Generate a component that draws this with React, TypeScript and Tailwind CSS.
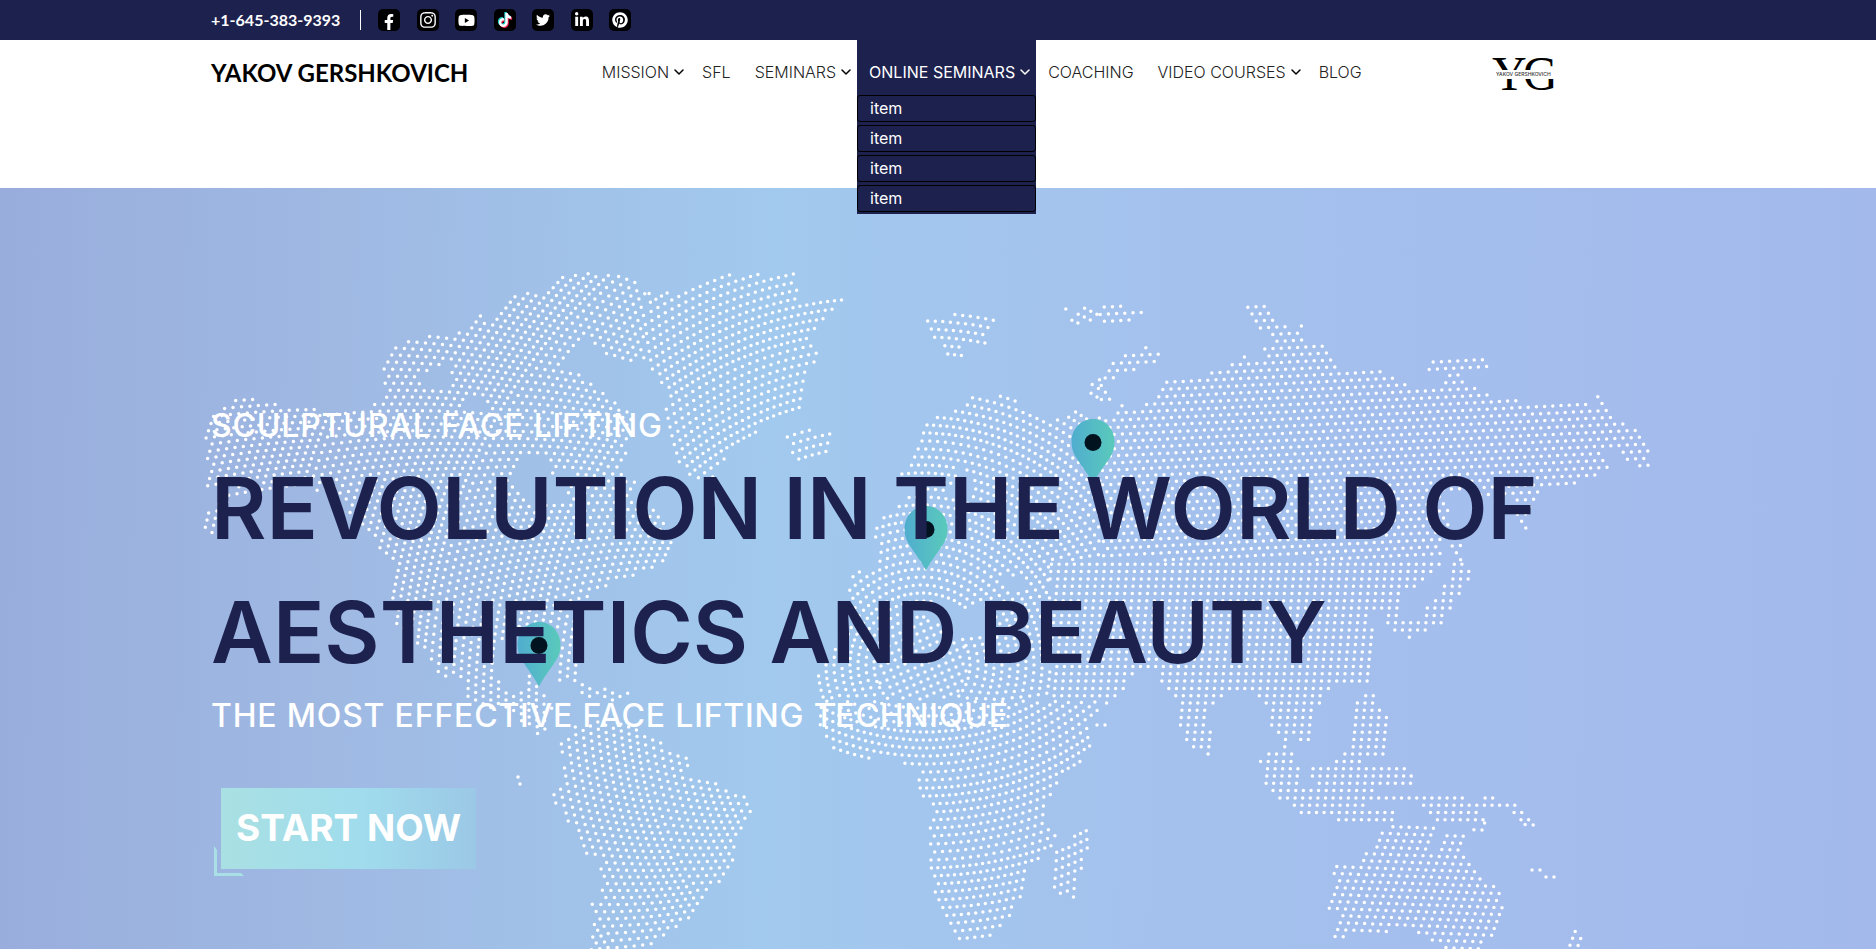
import React from "react";
import { ChevronDown } from "lucide-react";
import {
  FaFacebookF,
  FaInstagram,
  FaYoutube,
  FaTiktok,
  FaTwitter,
  FaLinkedinIn,
  FaPinterest,
} from "react-icons/fa";

type Pt = [number, number];

/* ---------- dotted world map ---------- */

const parse = (s: string): Pt[] =>
  s.split(" ").map((p) => p.split(",").map(Number) as Pt);

const LAND: Pt[][] = [
  // North America and Greenland
  "204,420 228,401 246,396 298,408 308,408 340,412 357,410 372,407 378,398 388,392 379,388 386,358 402,340 425,340 433,331 454,334 464,327 480,315 492,320 505,302 526,289 541,291 568,274 607,272 630,276 645,293 683,293 698,280 706,275 795,273 799,298 842,300 832,314 818,330 800,332 818,343 818,356 808,375 805,392 800,408 782,420 760,430 738,446 726,460 712,478 692,478 680,468 674,458 668,440 660,415 668,400 662,385 650,372 655,362 644,362 620,360 612,364 605,352 595,345 590,333 577,348 564,358 566,368 578,374 598,390 622,404 634,420 632,440 623,460 622,478 640,482 625,500 659,507 674,547 668,563 630,577 605,587 592,597 578,620 576,640 578,684 558,682 558,645 540,634 500,640 497,673 505,690 522,690 529,675 540,688 554,703 543,742 534,730 516,717 494,709 469,704 461,684 438,672 423,651 394,622 387,600 392,562 386,554 368,537 343,504 310,488 270,490 235,500 212,535 204,530 206,515 235,488 204,486 208,470 204,455",
  "577,680 598,686 632,693 625,702 600,700 577,692",
  // South America
  "557,740 567,734 575,727 590,720 642,726 650,738 662,742 690,760 688,778 702,775 720,786 738,791 755,802 743,830 735,845 735,860 722,882 707,892 698,902 694,912 680,928 655,945 655,962 586,962 590,940 592,915 590,898 602,900 600,870 605,862 603,852 586,858 572,828 556,805 550,790 561,782 560,768 568,760 557,748",
  // Europe, Africa and Asia
  "901,474 915,452 920,430 940,415 955,407 975,396 1003,395 1030,408 1048,416 1055,420 1075,410 1080,405 1095,418 1110,416 1122,408 1105,400 1085,398 1090,386 1098,376 1110,360 1130,352 1148,346 1166,350 1155,367 1140,368 1118,376 1107,386 1112,396 1128,408 1140,405 1150,398 1160,385 1170,376 1185,382 1195,378 1207,372 1228,364 1245,355 1268,362 1263,346 1272,340 1262,332 1242,308 1265,304 1287,328 1303,325 1307,340 1325,346 1345,370 1380,371 1403,384 1431,387 1441,383 1444,375 1426,372 1432,360 1482,358 1492,369 1458,374 1469,383 1487,394 1520,400 1536,406 1594,404 1597,396 1612,397 1607,413 1619,420 1647,433 1647,445 1654,466 1630,466 1620,450 1606,453 1608,472 1578,480 1570,488 1538,492 1535,507 1525,530 1518,520 1508,495 1490,495 1446,495 1450,520 1443,545 1441,563 1433,575 1420,587 1400,593 1400,606 1371,614 1374,630 1374,684 1350,685 1327,690 1325,699 1318,710 1317,727 1315,743 1302,742 1290,735 1289,748 1293,757 1262,754 1278,750 1280,740 1266,727 1266,710 1262,703 1248,690 1235,690 1215,707 1208,714 1208,725 1215,735 1209,757 1200,750 1188,745 1176,722 1178,705 1168,694 1162,682 1156,672 1135,668 1128,685 1120,697 1100,707 1090,722 1088,730 1092,745 1084,760 1070,772 1058,785 1047,800 1047,822 1057,833 1055,847 1045,854 1030,870 1029,885 1025,895 1012,907 1010,919 995,934 988,942 953,940 946,925 938,905 933,885 931,870 930,855 930,830 932,812 928,802 918,796 918,780 926,775 908,766 893,757 880,757 862,759 850,757 835,750 820,728 818,700 815,680 822,663 835,650 843,620 848,597 853,573 870,570 882,556 872,540 880,520 895,508 905,500 918,490",
  // Japan
  "1452,545 1463,545 1466,565 1475,571 1467,582 1454,605 1440,625 1422,632 1408,640 1397,632 1382,624 1382,605 1400,607 1402,620 1410,616 1424,618 1427,605 1440,598 1442,585 1452,575",
  // Svalbard, Franz Josef Land, Iceland, Madagascar
  "925,320 960,313 968,313 1002,321 985,332 986,347 962,345 962,358 945,358 943,345 928,340",
  "1062,306 1072,312 1085,304 1092,312 1098,310 1118,300 1128,306 1140,308 1152,310 1125,326 1104,322 1098,318 1090,326 1070,324",
  "787,430 806,428 836,431 830,448 833,458 805,463 787,456",
  "1084,824 1091,833 1088,847 1083,870 1078,885 1078,900 1062,897 1052,885 1056,860 1055,850 1070,840",
  // Philippines, Indonesia, New Guinea
  "1360,693 1373,693 1379,708 1387,715 1385,735 1390,757 1376,757 1370,747 1366,764 1402,766 1416,776 1414,786 1385,786 1376,790 1384,795 1460,794 1468,800 1482,798 1495,796 1512,803 1526,812 1538,830 1525,832 1515,817 1500,809 1478,809 1485,820 1484,832 1470,830 1465,820 1450,824 1440,824 1425,815 1418,803 1370,801 1362,809 1394,812 1392,822 1338,823 1335,815 1300,815 1280,800 1266,785 1262,770 1258,757 1293,752 1301,770 1298,787 1314,787 1309,767 1328,764 1345,754 1350,730",
  // Australia, New Zealand
  "1398,824 1438,825 1430,850 1440,850 1444,832 1465,832 1462,850 1477,865 1490,883 1505,890 1502,922 1493,937 1483,949 1430,947 1420,934 1400,930 1378,936 1345,936 1337,944 1331,930 1335,915 1326,907 1335,885 1333,867 1355,861 1367,852 1378,840 1382,831",
  "1573,930 1580,932 1586,942 1580,954 1566,954",
].map(parse);

const SEA: Pt[][] = [
  "522,453 545,460 552,474 560,464 572,474 566,500 540,505 518,492 510,478",
  "418,374 450,364 452,384 425,388",
  "463,394 486,402 484,412 465,408",
  "905,592 916,603 938,602 960,612 985,606 996,622 985,632 960,640 945,625 922,615",
  "1000,578 1015,576 1034,590 1010,594",
  "960,464 971,475 970,500 956,504 950,490 958,480",
].map(parse);

const inside = (x: number, y: number, poly: Pt[]) => {
  let hit = false;
  for (let i = 0, j = poly.length - 1; i < poly.length; j = i++) {
    const [xi, yi] = poly[i];
    const [xj, yj] = poly[j];
    if (yi > y !== yj > y && x < ((xj - xi) * (y - yi)) / (yj - yi) + xi) hit = !hit;
  }
  return hit;
};

const onLand = (x: number, y: number) =>
  LAND.some((p) => inside(x, y, p)) && !SEA.some((p) => inside(x, y, p));

type Zone = (x: number, y: number) => boolean;

// Dots on concentric arcs; the angular step is constant within a band of rings.
const arcs = (cx: number, cy: number, dr: number, step: number, zone: Zone): Pt[] => {
  const out: Pt[] = [];
  for (let k = 1; k * dr < 900; k++) {
    const r = k * dr;
    const band = 2 ** (Math.round(Math.log2(r) * 3) / 3);
    const n = Math.max(6, Math.round((2 * Math.PI * band) / step));
    for (let i = 0; i < n; i++) {
      const t = ((i + (k % 2) / 2) * 2 * Math.PI) / n;
      const x = cx + r * Math.cos(t);
      const y = cy + r * Math.sin(t);
      if (zone(x, y) && onLand(x, y)) out.push([x, y]);
    }
  }
  return out;
};

// Dots on a plain lattice: a runs along a row, b leads to the next row.
const grid = (o: Pt, a: Pt, b: Pt, zone: Zone): Pt[] => {
  const out: Pt[] = [];
  for (let j = -80; j < 120; j++) {
    for (let i = -120; i < 140; i++) {
      const x = o[0] + i * a[0] + j * b[0];
      const y = o[1] + i * a[1] + j * b[1];
      if (zone(x, y) && onLand(x, y)) out.push([x, y]);
    }
  }
  return out;
};

const isGreenland: Zone = (x, y) => x > 645 && x < 870 && y < 485;
const isSahara: Zone = (x, y) => Math.hypot(x - 922, y - 665) < 46;

const DOTS: Pt[] = [
  ...arcs(1000, 700, 7.6, 7.4, (x, y) => x < 800 && !isGreenland(x, y)),
  ...arcs(880, 700, 8.2, 7.1, isGreenland),
  ...arcs(
    922,
    665,
    8,
    7.1,
    (x, y) =>
      x >= 800 && !isGreenland(x, y) && !isSahara(x, y) && ((x < 1100 && y < 560) || (x < 1050 && y < 700)),
  ),
  ...grid([922, 665], [7, -3], [3, 7], (x, y) => isSahara(x, y) && y < 700),
  ...arcs(925, 500, 8, 7.1, (x, y) => x >= 800 && x < 1100 && y >= 700),
  ...grid([1240, 336], [8.2, -0.4], [4.2, 6.9], (x, y) => x >= 1100 && y < 560),
  ...grid([1372, 630], [7.6, 0], [-0.7, 7.3], (x, y) => y >= 560 && x >= (y < 700 ? 1050 : 1100) && y < 823),
  ...grid([1401, 827], [8.1, 0.3], [-2.6, 6.9], (x, y) => x > 1200 && y >= 823),
  [518, 777], [520, 784], [1097, 725], [1105, 725], [1532, 870], [1540, 870], [1546, 877], [1554, 877],
];

const DOT_PATH = DOTS.map(([x, y]) => `M${x.toFixed(1)} ${y.toFixed(1)}h0`).join("");

const PINS: Pt[] = [
  [539, 622],
  [926, 506],
  [1093, 419],
];

function WorldMap() {
  return (
    <svg
      aria-hidden="true"
      className="absolute inset-0 h-full w-full"
      viewBox="0 188 1876 761"
      preserveAspectRatio="xMidYMin slice"
    >
      <defs>
        <linearGradient id="pin" x1="0" x2="1" y1="0" y2="0">
          <stop offset="0" stopColor="#50adcf" />
          <stop offset="1" stopColor="#5acabb" />
        </linearGradient>
      </defs>
      <path d={DOT_PATH} stroke="#fff" strokeWidth="3.5" strokeLinecap="round" fill="none" />
      {PINS.map(([x, y]) => (
        <g key={x} transform={`translate(${x - 22} ${y})`}>
          <path d="M22 0C10 0 0.500 10 0.500 22.500C0.500 29 2 34 5 38.500C12 49 17 55 22 64.500C27 55 32 49 39 38.500C42 34 43.500 29 43.500 22.500C43.500 10 34 0 22 0Z" fill="url(#pin)" />
          <circle cx="22" cy="23.500" r="8.500" fill="#01131f" />
        </g>
      ))}
    </svg>
  );
}

/* ---------- header ---------- */

const SOCIAL = [
  { name: "Facebook", icon: <FaFacebookF className="h-4 w-4 translate-y-0.5" /> },
  { name: "Instagram", icon: <FaInstagram className="h-[18px] w-[18px]" /> },
  { name: "YouTube", icon: <FaYoutube className="h-[17px] w-[17px]" /> },
  {
    name: "TikTok",
    icon: <FaTiktok className="h-3.5 w-3.5 [filter:drop-shadow(-1px_-1px_0_#25d5cf)_drop-shadow(1px_1px_0_#e8264f)]" />,
  },
  { name: "Twitter", icon: <FaTwitter className="h-3.5 w-3.5" /> },
  { name: "LinkedIn", icon: <FaLinkedinIn className="h-4 w-4" /> },
  { name: "Pinterest", icon: <FaPinterest className="h-4 w-4" /> },
];

const NAV = [
  { label: "MISSION", more: true },
  { label: "SFL" },
  { label: "SEMINARS", more: true },
  { label: "ONLINE SEMINARS", more: true, items: ["item", "item", "item", "item"] },
  { label: "COACHING" },
  { label: "VIDEO COURSES", more: true },
  { label: "BLOG" },
];

function Logo() {
  return (
    <svg role="img" aria-label="YG" className="mt-[11px] h-[42px] w-[62px] overflow-visible" viewBox="0 0 62 42">
      <g fontFamily="'Liberation Serif', serif" fontSize="48" fill="#000">
        <text x="-3" y="39">Y</text>
        <text x="28" y="39">G</text>
      </g>
      <rect x="-1" y="19" width="64" height="9" fill="#fff" />
      <text x="1" y="25" fontFamily="Inter, sans-serif" fontSize="5" fontWeight="500" fill="#333">
        YAKOV GERSHKOVICH
      </text>
    </svg>
  );
}

export default function App() {
  return (
    <div className="flex min-h-screen flex-col bg-white font-['Inter',sans-serif]">
      <div className="flex h-10 items-center bg-[#1d214e] pl-[11.25%] text-white">
        <a href="tel:+16453839393" className="font-['Lato',sans-serif] text-base leading-6 font-bold">
          +1-645-383-9393
        </a>
        <span className="ml-5 h-5 w-px bg-white" />
        <div className="ml-[17px] flex w-[253px] justify-between">
          {SOCIAL.map((s) => (
            <a
              key={s.name}
              href="#"
              aria-label={s.name}
              className="flex h-[22px] w-[22px] items-center justify-center overflow-hidden rounded-[5px] bg-black"
            >
              {s.icon}
            </a>
          ))}
        </div>
      </div>

      <header className="relative z-10 flex h-[148px] items-start justify-between pr-[17%] pl-[11.25%]">
        <a href="#" className="mt-[17px] font-['Lato',sans-serif] text-2xl leading-8 font-bold text-black">
          YAKOV GERSHKOVICH
        </a>
        <nav>
          <ul className="flex">
            {NAV.map((n) => (
              <li key={n.label} className={n.items ? "relative bg-[#1d214e] text-white" : "text-[#222]"}>
                <a
                  href="#"
                  className={
                    "flex h-[55px] items-center pt-2 pl-3 text-base whitespace-nowrap " +
                    (n.more ? "pr-[3px] " : "pr-3 ") +
                    (n.items ? "font-normal" : "font-light")
                  }
                >
                  {n.label}
                  {n.more && (
                    <ChevronDown
                      className={"ml-0.5 h-4 w-4 " + (n.items ? "text-white" : "text-black")}
                      strokeWidth={2.25}
                    />
                  )}
                </a>
                {n.items && (
                  <ul className="absolute top-full left-0 flex w-full flex-col gap-[3px] bg-[#1d214e] pb-0.5">
                    {n.items.map((it, i) => (
                      <li key={i}>
                        <a href="#" className="block rounded-[3px] border border-black px-3 text-base leading-[25px]">
                          {it}
                        </a>
                      </li>
                    ))}
                  </ul>
                )}
              </li>
            ))}
          </ul>
        </nav>
        <Logo />
      </header>

      <main className="relative grow bg-[linear-gradient(91deg,#99addc_0%,#9fb9e3_18%,#a2c9ee_41%,#a4c1ed_63%,#a3b9ec_100%)]">
        <WorldMap />
        <section className="relative pt-[217px] pr-[10%] pb-20 pl-[11.25%]">
          <p className="text-[32px] leading-[42px] font-medium tracking-wide text-white">SCULPTURAL FACE LIFTING</p>
          <h1 className="text-[85px] leading-[124px] font-semibold text-[#1d214e]">
            REVOLUTION IN THE WORLD OF AESTHETICS AND BEAUTY
          </h1>
          <p className="text-[32px] leading-[42px] font-medium tracking-wide text-white">
            THE MOST EFFECTIVE FACE LIFTING TECHNIQUE
          </p>
          <div className="relative mt-[51px] ml-2.5 w-fit">
            <button
              type="button"
              className="block h-[81px] bg-[linear-gradient(90deg,#a9e0e3_0%,#a0dced_55%,#9bc8e6_100%)] px-[15px] pb-0.5 text-[37px] font-bold text-white"
            >
              START NOW
            </button>
            <svg aria-hidden="true" className="absolute -bottom-[7px] -left-[7px] h-[30px] w-[30px]" viewBox="0 0 30 30">
              <path d="M0 0L3 4V27H27L30 30H0Z" fill="#a9e0e6" />
            </svg>
          </div>
        </section>
      </main>
    </div>
  );
}
